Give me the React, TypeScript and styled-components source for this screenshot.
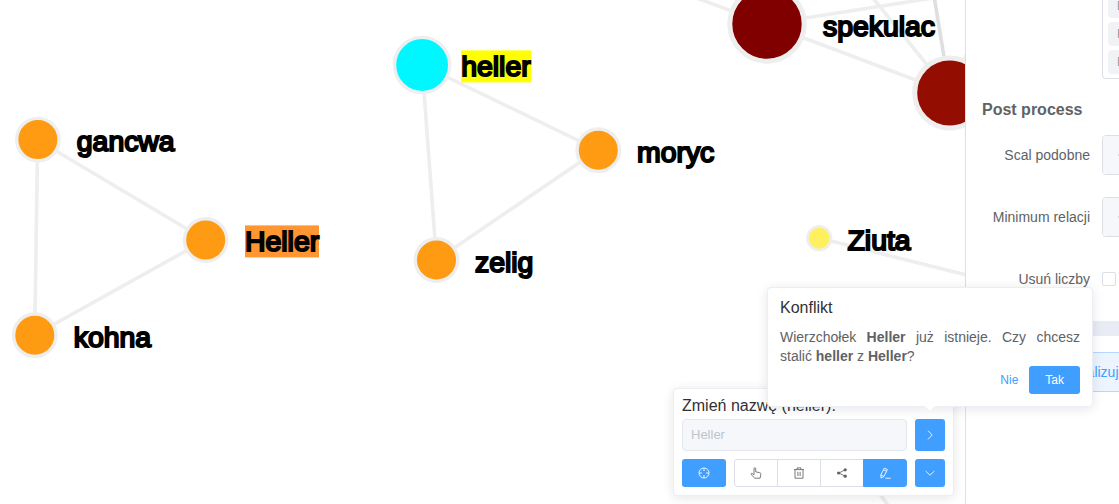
import React from 'react';
import styled, { createGlobalStyle, css } from 'styled-components';

const GlobalStyle = createGlobalStyle`
  * { box-sizing: border-box; }
  body {
    margin: 0;
    overflow: hidden;
    background: #fff;
    font-family: 'Liberation Sans', Arial, sans-serif;
    color: #606266;
  }
`;

const Page = styled.div`
  position: relative;
  display: flex;
  width: 1119px;
  height: 504px;
  overflow: hidden;
`;

const GraphPane = styled.main`
  flex: 0 0 965px;
  overflow: hidden;
`;

const GraphSvg = styled.svg`
  display: block;
  width: 965px;
  height: 504px;
`;

const NodeLabel = styled.text`
  font: 28.4px 'Liberation Sans', Arial, sans-serif;
  fill: #000;
  stroke: #000;
  stroke-width: 2px;
`;

const Sidebar = styled.aside`
  flex: 0 0 420px;
  height: 504px;
  border-left: 1px solid #dcdfe6;
  background: #fff;
  overflow: hidden;
`;

const TagSelect = styled.div`
  display: flex;
  flex-direction: column;
  align-items: flex-start;
  justify-content: flex-end;
  gap: 4px;
  width: 260px;
  height: 79px;
  margin-left: 136px;
  padding: 0 5px 4px;
  border: 1px solid #dcdfe6;
  border-top: 0;
  border-radius: 0 0 4px 4px;
`;

const Tag = styled.span`
  flex: none;
  height: 24px;
  padding: 0 8px;
  border: 1px solid #f0f2f5;
  border-radius: 4px;
  background: #f0f2f5;
  color: #909399;
  font-size: 12px;
  line-height: 22px;
`;

const SectionTitle = styled.h3`
  margin: 22px 0 0 16px;
  font-size: 16px;
  line-height: 18px;
  font-weight: 700;
`;

const Form = styled.div`
  display: flex;
  flex-direction: column;
  gap: 22px;
  margin-top: 16px;
`;

const FormItem = styled.div`
  display: flex;
  align-items: center;
  height: 40px;
`;

const FieldLabel = styled.label`
  width: 136px;
  padding-right: 12px;
  text-align: right;
  font-size: 14px;
  line-height: 40px;
`;

const NumberField = styled.div`
  display: flex;
  width: 180px;
  height: 40px;
  border: 1px solid #dcdfe6;
  border-radius: 4px;
  overflow: hidden;
`;

const StepButton = styled.span`
  display: flex;
  align-items: center;
  justify-content: center;
  width: 40px;
  border-right: 1px solid #dcdfe6;
  background: #f5f7fa;
`;

const CheckBox = styled.span`
  width: 14px;
  height: 14px;
  border: 1px solid #dcdfe6;
  border-radius: 2px;
  background: #fff;
`;

const Divider = styled.div`
  height: 15px;
  margin: 22px 16px 0;
  background: #e9ecf5;
`;

const PlainButton = styled.button`
  display: block;
  width: 200px;
  height: 40px;
  margin: 16px 0 0 21px;
  padding: 0;
  border: 1px solid #b3d8ff;
  border-radius: 4px;
  background: #ecf5ff;
  color: #409eff;
  font: 14px 'Liberation Sans', Arial, sans-serif;
`;

const floating = css`
  position: absolute;
  border: 1px solid #ebeef5;
  border-radius: 4px;
  background: #fff;
  box-shadow: 0 2px 12px 0 rgba(0, 0, 0, 0.1);
`;

const NodePanel = styled.section`
  ${floating}
  left: 673px;
  top: 388px;
  width: 281px;
  height: 108px;
  padding: 8px;
`;

const PanelTitle = styled.div`
  height: 22px;
  color: #303133;
  font-size: 16px;
  line-height: 18px;
`;

const PanelRow = styled.div`
  display: flex;
  gap: 8px;
  & + & { margin-top: 8px; }
`;

const NameInput = styled.div`
  width: 225px;
  height: 32px;
  padding: 0 8px;
  border: 1px solid #e4e7ed;
  border-radius: 4px;
  background: #f5f7fa;
  color: #c0c4cc;
  font-size: 13px;
  line-height: 30px;
`;

const IconButton = styled.button<{ $width: number; $height?: number }>`
  display: flex;
  align-items: center;
  justify-content: center;
  width: ${(p) => p.$width}px;
  height: ${(p) => p.$height ?? 28}px;
  padding: 0;
  border: 0;
  border-radius: 3px;
  background: #409eff;
  color: #fff;
`;

const ButtonGroup = styled.div`
  display: flex;
  width: 173px;
  height: 28px;
`;

const GroupButton = styled.button<{ $active?: boolean }>`
  display: flex;
  align-items: center;
  justify-content: center;
  width: 44px;
  height: 28px;
  padding: 0;
  border: 1px solid ${(p) => (p.$active ? '#409eff' : '#dcdfe6')};
  background: ${(p) => (p.$active ? '#409eff' : '#fff')};
  color: ${(p) => (p.$active ? '#fff' : '#606266')};
  & + & { margin-left: -1px; }
  &:first-child { border-radius: 3px 0 0 3px; }
  &:last-child { border-radius: 0 3px 3px 0; }
`;

const Popover = styled.section`
  ${floating}
  left: 767px;
  top: 287px;
  width: 326px;
  height: 120px;
  padding: 12px;
`;

const PopoverArrow = styled.svg`
  position: absolute;
  left: 156px;
  top: 117px;
  width: 12px;
  height: 7px;
`;

const PopoverTitle = styled.div`
  margin-bottom: 12px;
  color: #303133;
  font-size: 16px;
  line-height: 16px;
`;

const PopoverText = styled.p`
  margin: 0;
  font-size: 14px;
  line-height: 19px;
  text-align: justify;
`;

const PopoverActions = styled.div`
  display: flex;
  justify-content: flex-end;
`;

const ActionButton = styled.button<{ $primary?: boolean }>`
  height: 28px;
  padding: 0 ${(p) => (p.$primary ? 16 : 11)}px;
  border: 0;
  border-radius: 3px;
  background: ${(p) => (p.$primary ? '#409eff' : 'transparent')};
  color: ${(p) => (p.$primary ? '#fff' : '#409eff')};
  font: 12px 'Liberation Sans', Arial, sans-serif;
`;

const Glyph = styled.svg`
  width: 12px;
  height: 12px;
  fill: none;
  stroke: currentColor;
  stroke-width: 0.85;
`;

const AimIcon = () => (
  <Glyph viewBox="0 0 12 12">
    <circle cx="6" cy="6" r="5" />
    <path d="M6 1v3M6 8v3M1 6h3M8 6h3" />
  </Glyph>
);

const PointerIcon = () => (
  <Glyph viewBox="0 0 12 12">
    <path d="M4 7.8V1.6a.85.85 0 0 1 1.7 0v3.2l4 .9c.9.2 1.3.8 1.1 1.6l-.7 3.9H4.8L1.2 7.6c-.5-.8.4-1.6 1.1-1L4 7.8" />
  </Glyph>
);

const TrashIcon = () => (
  <Glyph viewBox="0 0 12 12">
    <path d="M1 2.6h10M4 2.6V.9h4v1.7M2 2.6v8.6h8V2.6M4.9 4.8v4.2M7.1 4.8v4.2" />
  </Glyph>
);

const ShareIcon = () => (
  <Glyph viewBox="0 0 12 12">
    <path d="M9 2.8 3 6l6 3.2" />
    <g fill="currentColor" stroke="none">
      <circle cx="2.6" cy="6" r="1.6" />
      <circle cx="9.2" cy="2.8" r="1.6" />
      <circle cx="9.2" cy="9.2" r="1.6" />
    </g>
  </Glyph>
);

const EditIcon = () => (
  <Glyph viewBox="0 0 12 12">
    <path d="M5.4 1.1 8.4 2.6 4.9 9.5 2 11.1 1.8 8zM4.6 2.7l2.9 1.5M1.8 8l3.1 1.5M6.3 11.2H11.6" />
  </Glyph>
);

const ChevronRight = () => (
  <Glyph viewBox="0 0 12 12"><path d="M4 1.6 8.2 6 4 10.4" /></Glyph>
);

const ChevronDown = () => (
  <Glyph viewBox="0 0 12 12"><path d="M1.6 4 6 8.2 10.4 4" /></Glyph>
);

const edges = [
  [37.7, 140, 205.5, 240],
  [37.7, 140, 34.7, 335],
  [205.5, 240, 34.7, 335],
  [422, 65, 598, 150],
  [422, 65, 436.5, 260],
  [598, 150, 436.5, 260],
  [767, 24, 950, 93],
  [767, 24, 680, -8],
  [767, 24, 965, -7],
  [950, 93, 868, -8],
  [819, 238, 990, 281],
  [860, 467, 890, 508],
];

type NodeDatum = {
  x: number;
  y: number;
  r: number;
  ring: number;
  fill: string;
  label?: string;
  lx?: number;
  ly?: number;
  mark?: string;
  markWidth?: number;
};

const nodes: NodeDatum[] = [
  { x: 37.9, y: 139.6, r: 21.2, ring: 3.4, fill: '#ff9a13', label: 'gancwa', lx: 76.8, ly: 151 },
  { x: 205.7, y: 240, r: 21.2, ring: 3.4, fill: '#ff9a13', label: 'Heller', lx: 245, ly: 251, mark: '#ff9632', markWidth: 74 },
  { x: 34.8, y: 335.2, r: 21.2, ring: 3.4, fill: '#ff9a13', label: 'kohna', lx: 73.8, ly: 347 },
  { x: 422.1, y: 65, r: 27.6, ring: 3.4, fill: '#00f7ff', label: 'heller', lx: 461.2, ly: 76, mark: '#ffff00', markWidth: 70 },
  { x: 598.3, y: 150.2, r: 21.2, ring: 3.4, fill: '#ff9a13', label: 'moryc', lx: 637, ly: 162 },
  { x: 436.5, y: 260, r: 21.2, ring: 3.4, fill: '#ff9a13', label: 'zelig', lx: 475, ly: 272 },
  { x: 767, y: 24, r: 37.2, ring: 5, fill: '#800000', label: 'spekulac', lx: 823, ly: 36 },
  { x: 949.7, y: 93, r: 35, ring: 5, fill: '#930d00' },
  { x: 819.2, y: 238.2, r: 11.8, ring: 2.6, fill: '#fff05f', label: 'Ziuta', lx: 847.5, ly: 250 },
];

const Graph = () => (
  <GraphSvg viewBox="0 0 965 504">
    <g stroke="#eeeeee" strokeWidth="3.6">
      {edges.map(([x1, y1, x2, y2], i) => <line key={i} x1={x1} y1={y1} x2={x2} y2={y2} />)}
      <line x1="934" y1="-4" x2="950" y2="93" stroke="#dfdfdf" />
      <line x1="950" y1="93" x2="985" y2="15" strokeWidth="5" />
    </g>
    {nodes.map((n) => (
      <g key={`${n.x}-${n.y}`}>
        <circle cx={n.x} cy={n.y} r={n.r} fill={n.fill} stroke="#eeeeee" strokeWidth={n.ring} />
        {n.mark && <rect x={n.lx} y={n.ly! - 25.6} width={n.markWidth} height="32" fill={n.mark} />}
        {n.label && <NodeLabel x={n.lx} y={n.ly}>{n.label}</NodeLabel>}
      </g>
    ))}
  </GraphSvg>
);

const NumberInput = () => (
  <NumberField>
    <StepButton>
      <Glyph viewBox="0 0 12 12"><path d="M1.5 6h9" /></Glyph>
    </StepButton>
  </NumberField>
);

export default function App() {
  return (
    <>
      <GlobalStyle />
      <Page>
        <GraphPane><Graph /></GraphPane>
        <Sidebar>
          <TagSelect>
            <Tag>Liczby</Tag>
            <Tag>Inne</Tag>
            <Tag>Imiona</Tag>
          </TagSelect>
          <SectionTitle>Post process</SectionTitle>
          <Form>
            <FormItem><FieldLabel>Scal podobne</FieldLabel><NumberInput /></FormItem>
            <FormItem><FieldLabel>Minimum relacji</FieldLabel><NumberInput /></FormItem>
            <FormItem><FieldLabel>Usuń liczby</FieldLabel><CheckBox /></FormItem>
          </Form>
          <Divider />
          <PlainButton>Wizualizuj</PlainButton>
        </Sidebar>

        <NodePanel>
          <PanelTitle>Zmień nazwę (heller):</PanelTitle>
          <PanelRow>
            <NameInput>Heller</NameInput>
            <IconButton $width={30} $height={32}><ChevronRight /></IconButton>
          </PanelRow>
          <PanelRow>
            <IconButton $width={44}><AimIcon /></IconButton>
            <ButtonGroup>
              <GroupButton><PointerIcon /></GroupButton>
              <GroupButton><TrashIcon /></GroupButton>
              <GroupButton><ShareIcon /></GroupButton>
              <GroupButton $active><EditIcon /></GroupButton>
            </ButtonGroup>
            <IconButton $width={30}><ChevronDown /></IconButton>
          </PanelRow>
        </NodePanel>

        <Popover>
          <PopoverTitle>Konflikt</PopoverTitle>
          <PopoverText>
            Wierzchołek <b>Heller</b> już istnieje. Czy chcesz stalić <b>heller</b> z <b>Heller</b>?
          </PopoverText>
          <PopoverActions>
            <ActionButton>Nie</ActionButton>
            <ActionButton $primary>Tak</ActionButton>
          </PopoverActions>
          <PopoverArrow viewBox="0 0 12 7">
            <path d="M0 1 6 6.5 12 1V0H0Z" fill="#fff" />
            <path d="M0.5 1.5 6 6.5 11.5 1.5" fill="none" stroke="#ebeef5" />
          </PopoverArrow>
        </Popover>
      </Page>
    </>
  );
}
